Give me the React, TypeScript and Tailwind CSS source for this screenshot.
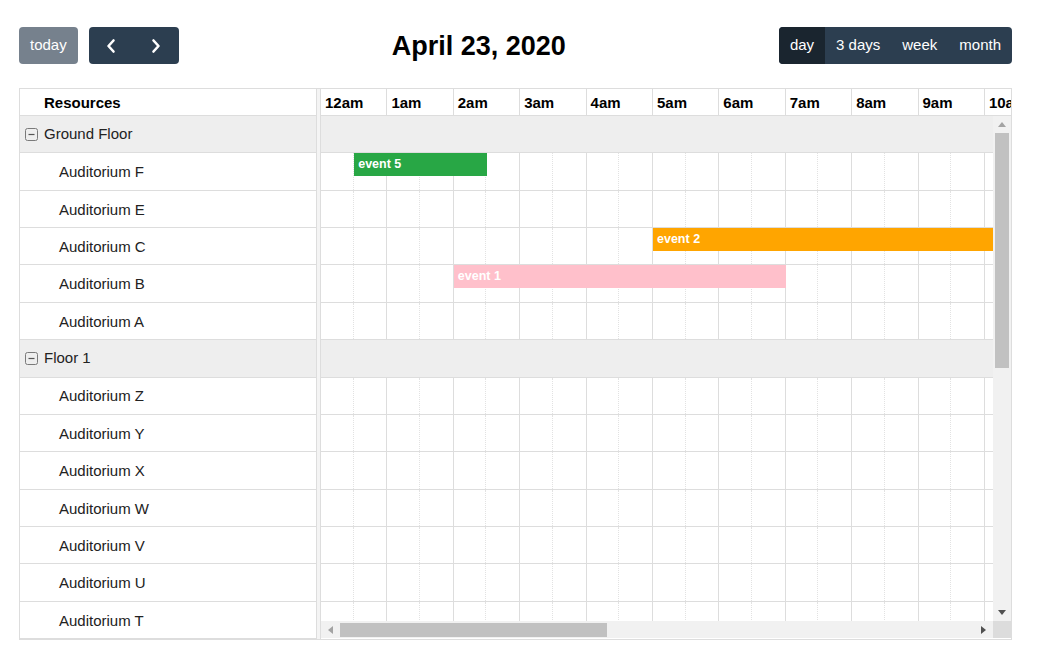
import React from "react";

const HOUR_W = 66.4;
const ROW_H = "h-[37.36px]";

const hours = [
    "12am", "1am", "2am", "3am", "4am", "5am", "6am", "7am", "8am", "9am", "10am", "11am",
    "12pm", "1pm", "2pm", "3pm", "4pm", "5pm", "6pm", "7pm", "8pm", "9pm", "10pm", "11pm",
];

type Row = { kind: "group" | "room"; name: string };

const rows: Row[] = [
    { kind: "group", name: "Ground Floor" },
    { kind: "room", name: "Auditorium F" },
    { kind: "room", name: "Auditorium E" },
    { kind: "room", name: "Auditorium C" },
    { kind: "room", name: "Auditorium B" },
    { kind: "room", name: "Auditorium A" },
    { kind: "group", name: "Floor 1" },
    { kind: "room", name: "Auditorium Z" },
    { kind: "room", name: "Auditorium Y" },
    { kind: "room", name: "Auditorium X" },
    { kind: "room", name: "Auditorium W" },
    { kind: "room", name: "Auditorium V" },
    { kind: "room", name: "Auditorium U" },
    { kind: "room", name: "Auditorium T" },
];

const events = [
    { room: "Auditorium F", title: "event 5", start: 0.5, end: 2.5, color: "bg-[#28a745]" },
    { room: "Auditorium C", title: "event 2", start: 5, end: 12, color: "bg-[#ffa500]" },
    { room: "Auditorium B", title: "event 1", start: 2, end: 7, color: "bg-[#ffc0cb]" },
];

function MinusBox() {
    return (
        <svg width="13" height="13" viewBox="0 0 13 13" className="shrink-0">
            <rect x="0.5" y="0.5" width="12" height="12" rx="2" fill="none" stroke="#7a7a7a" />
            <line x1="3.5" y1="6.5" x2="9.5" y2="6.5" stroke="#555" strokeWidth="1.2" />
        </svg>
    );
}

function Chevron({ dir }: { dir: "left" | "right" }) {
    return (
        <svg width="12" height="16" viewBox="0 0 12 16">
            <polyline
                points={dir === "left" ? "8.5,2.5 3.5,8 8.5,13.5" : "3.5,2.5 8.5,8 3.5,13.5"}
                fill="none"
                stroke="white"
                strokeWidth="2.6"
                strokeLinecap="round"
                strokeLinejoin="round"
            />
        </svg>
    );
}

function Arrow({ dir, color }: { dir: "up" | "down" | "left" | "right"; color: string }) {
    const pts = {
        up: "0,5 4,0 8,5",
        down: "0,0 8,0 4,5",
        left: "5,0 5,8 0,4",
        right: "0,0 0,8 5,4",
    }[dir];
    const vertical = dir === "up" || dir === "down";
    return (
        <svg width={vertical ? 8 : 5} height={vertical ? 5 : 8} viewBox={vertical ? "0 0 8 5" : "0 0 5 8"}>
            <polygon points={pts} fill={color} />
        </svg>
    );
}

function TimelineRow({ row }: { row: Row }) {
    if (row.kind === "group") {
        return <div className={`${ROW_H} shrink-0 border-b border-[#ddd] bg-[#eee]`} />;
    }
    const rowEvents = events.filter((e) => e.room === row.name);
    return (
        <div className={`${ROW_H} shrink-0 relative flex border-b border-[#ddd]`}>
            {hours.map((h) => (
                <div key={h} className="w-[66.4px] shrink-0 flex border-r border-[#ddd]">
                    <div className="w-1/2 border-r border-dotted border-[#e2e2e2]" />
                    <div className="w-1/2" />
                </div>
            ))}
            {rowEvents.map((e) => (
                <div
                    key={e.title}
                    className={`absolute top-0 h-[23px] ${e.color} text-white font-bold text-[12.5px] leading-[23px] pl-[4px] overflow-hidden whitespace-nowrap`}
                    style={{ left: e.start * HOUR_W, width: (e.end - e.start) * HOUR_W }}
                >
                    {e.title}
                </div>
            ))}
        </div>
    );
}

export default function App() {
    return (
        <div className="min-h-screen bg-white text-[#222] font-['Liberation_Sans',Arial,sans-serif]">
            <div className="ml-[19px] w-[993px] pt-[27px]">
                {/* toolbar */}
                <div className="flex items-center justify-between h-[37px]">
                    <div className="flex gap-[11px]">
                        <button className="h-[37px] px-[11px] rounded-[4px] bg-[#76818d] text-white text-[15px]">today</button>
                        <div className="flex h-[37px] rounded-[4px] bg-[#2c3e50] overflow-hidden">
                            <button className="w-[45px] flex items-center justify-center">
                                <Chevron dir="left" />
                            </button>
                            <button className="w-[45px] flex items-center justify-center">
                                <Chevron dir="right" />
                            </button>
                        </div>
                    </div>
                    <h2 className="text-[27px] font-bold text-black pt-[2px]">April 23, 2020</h2>
                    <div className="flex h-[37px] rounded-[4px] bg-[#2c3e50] overflow-hidden text-white text-[15px]">
                        <button className="px-[11px] bg-[#1a252f]">day</button>
                        <button className="px-[11px]">3 days</button>
                        <button className="px-[11px]">week</button>
                        <button className="px-[11px]">month</button>
                    </div>
                </div>

                {/* scheduler */}
                <div className="mt-[24px] flex border-t border-[#ddd]">
                    {/* resource column */}
                    <div className="w-[298px] shrink-0 border-l border-r border-b border-[#ddd] flex flex-col">
                        <div className="h-[27px] border-b border-[#ddd] pl-[24px] pt-[2px] flex items-center font-bold text-[15px] text-black">
                            Resources
                        </div>
                        <div className="h-[523px] overflow-hidden flex flex-col">
                            {rows.map((r) =>
                                r.kind === "group" ? (
                                    <div key={r.name} className={`${ROW_H} shrink-0 border-b border-[#ddd] bg-[#eee] flex items-center gap-[6px] pl-[5px] text-[15px]`}>
                                        <MinusBox />
                                        <span>{r.name}</span>
                                    </div>
                                ) : (
                                    <div key={r.name} className={`${ROW_H} shrink-0 border-b border-[#ddd] flex items-center pl-[39px] pt-[2px] text-[15px]`}>
                                        {r.name}
                                    </div>
                                )
                            )}
                        </div>
                    </div>

                    {/* splitter */}
                    <div className="w-[3px] shrink-0 bg-[#f4f4f4] border-b border-[#ddd]" />

                    {/* timeline */}
                    <div className="w-[692px] shrink-0 border-l border-r border-b border-[#ddd] flex flex-col">
                        <div className="h-[27px] border-b border-[#ddd] flex overflow-hidden">
                            {hours.map((h) => (
                                <div key={h} className="w-[66.4px] shrink-0 border-r border-[#ddd] pl-[4px] pt-[2px] flex items-center font-bold text-[15px] text-black whitespace-nowrap">
                                    {h}
                                </div>
                            ))}
                        </div>
                        <div className="flex h-[505px]">
                            <div className="w-[672px] overflow-hidden flex flex-col">
                                {rows.map((r) => (
                                    <TimelineRow key={r.name} row={r} />
                                ))}
                            </div>
                            <div className="w-[18px] bg-[#f1f1f1] flex flex-col items-center">
                                <div className="h-[17px] flex items-center justify-center">
                                    <Arrow dir="up" color="#a3a3a3" />
                                </div>
                                <div className="w-[14px] h-[235px] bg-[#c1c1c1]" />
                                <div className="flex-1" />
                                <div className="h-[17px] flex items-center justify-center">
                                    <Arrow dir="down" color="#505050" />
                                </div>
                            </div>
                        </div>
                        <div className="flex h-[17px]">
                            <div className="w-[672px] bg-[#f1f1f1] flex items-center">
                                <div className="w-[19px] flex justify-center">
                                    <Arrow dir="left" color="#a3a3a3" />
                                </div>
                                <div className="w-[267px] h-[14px] bg-[#c1c1c1]" />
                                <div className="flex-1" />
                                <div className="w-[19px] flex justify-center">
                                    <Arrow dir="right" color="#505050" />
                                </div>
                            </div>
                            <div className="w-[18px] bg-[#dcdcdc]" />
                        </div>
                    </div>
                </div>
            </div>
        </div>
    );
}
